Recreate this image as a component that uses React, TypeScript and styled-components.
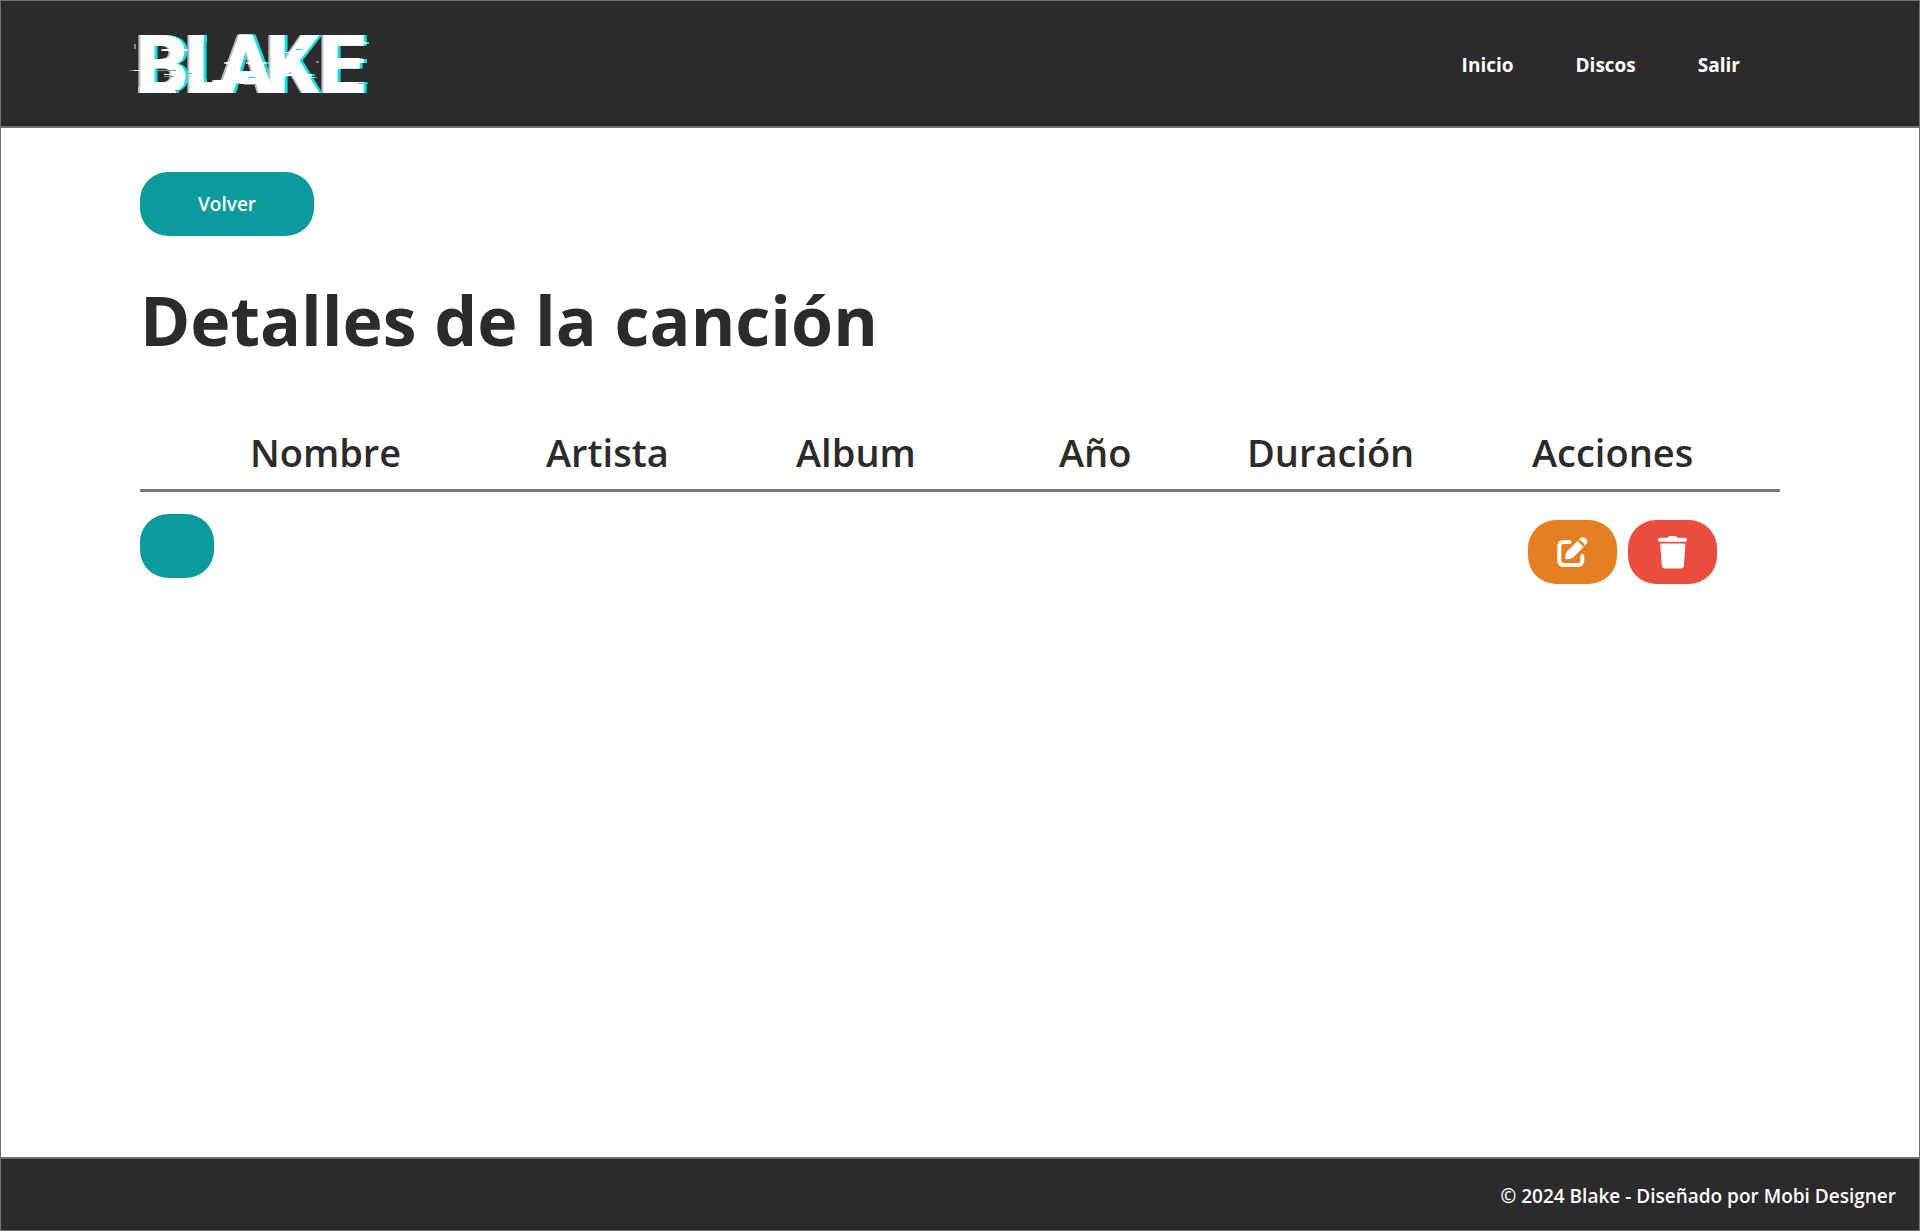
import React from "react";
import styled, { createGlobalStyle } from "styled-components";

const Global = createGlobalStyle`
  *, *::before, *::after { box-sizing: border-box; }
  body { margin: 0; background: #fff; color: #2b2b2b; font-family: "Open Sans", "Segoe UI", sans-serif; }
`;

const Page = styled.div`
  min-height: 100vh;
  display: flex;
  flex-direction: column;
  border: 1px solid #707070;
`;

const Header = styled.header`
  display: flex;
  align-items: center;
  justify-content: space-between;
  min-height: 127px;
  padding: 0 179px 0 127px;
  background: #2b2b2b;
  border-bottom: 2px solid #707070;
`;

const LogoLink = styled.a`
  display: block;
`;

const LogoArt = styled.svg`
  display: block;
  width: 250px;
  height: 101px;
`;

const LogoLetters = styled.g`
  fill: #fff;
  filter: drop-shadow(-2px 0 0 #c3b9c3) drop-shadow(3px 0 0 #10e0e4);
`;

const LogoText = styled.text`
  font-family: Roboto, sans-serif;
  font-size: 82px;
  font-weight: 900;
`;

const Nav = styled.nav`
  display: flex;
  gap: 62px;
  padding-top: 2px;
`;

const NavLink = styled.a`
  color: #fff;
  font-size: 19px;
  line-height: 28px;
  font-weight: 700;
  text-decoration: none;
`;

const Main = styled.main`
  flex: 1;
  padding: 44px 139px;
`;

const Pill = styled.button<{ $color: string; $pad: number }>`
  display: flex;
  align-items: center;
  justify-content: center;
  height: 64px;
  padding: 0 ${(p) => p.$pad}px;
  border: 0;
  border-radius: 28px;
  background: ${(p) => p.$color};
  color: #fff;
  font: 600 19px/28px "Open Sans", "Segoe UI", sans-serif;
  cursor: pointer;
`;

const Title = styled.h1`
  margin: 36px 0 54px;
  font-size: 68px;
  line-height: 96px;
  font-weight: 700;
`;

const Table = styled.table`
  width: 100%;
  table-layout: fixed;
  border-collapse: separate;
  border-spacing: 0;
`;

const HeadCell = styled.th`
  padding: 0 0 7px 4px;
  border-bottom: 3px solid #787878;
  font-size: 38px;
  line-height: 60px;
  font-weight: 600;
  text-align: left;
  white-space: nowrap;
`;

const Cell = styled.td`
  padding: 22px 0 0;
  vertical-align: top;
`;

const Actions = styled.div`
  display: flex;
  gap: 11px;
  padding-top: 6px;
`;

const Footer = styled.footer`
  display: flex;
  align-items: center;
  justify-content: flex-end;
  min-height: 73px;
  padding: 2px 23px 0;
  background: #2b2b2b;
  border-top: 2px solid #707070;
  color: #fff;
  font-size: 19px;
  line-height: 28px;
  font-weight: 600;
`;

const columns = [
  { label: "", width: 106 },
  { label: "Nombre", width: 296 },
  { label: "Artista", width: 250 },
  { label: "Album", width: 263 },
  { label: "Año", width: 188 },
  { label: "Duración", width: 285 },
  { label: "Acciones", width: 252 },
];

const Logo = () => (
  <LogoArt viewBox="0 0 250 101" role="img" aria-label="Blake">
    <LogoLetters>
      <LogoText x="8 57 90 138 191" y="80">BLAKE</LogoText>
      {/* glitch slices pulled out of the letters */}
      <path d="M12 74h36v6H12zM35 36h24v2H35zM62 22h14v7H62zM62 66h14v8H62z" />
      <path d="M98 49h14v2H98zM120 49h18v2h-18zM86 67h30v3H86zM112 69h26v2h-26z" />
      <path d="M120 66h26v2h-26zM142 39h34v1h-34zM142 61h42v2h-42zM168 64h18v1h-18z" />
      <path d="M198 29h40v2h-40zM198 46h38v4h-38zM196 56h14v1h-14zM198 69h38v1h-38z" />
    </LogoLetters>
    <path d="M5 57h18v1H5zM36 61h12v1H36z" fill="#fff" />
    <path d="M28 57h20v1H28zM116 71h12v1h-12zM36 63h9v1h-9z" fill="#8d8790" />
    <path d="M2 57h4v1H2zM6 31h2v5H6zM188 48h3v2h-3zM47 77h4v1h-4z" fill="#8a7c8c" />
    <path d="M230 70h10v1h-10zM120 64h7v1h-7zM168 36h6v1h-6zM60 60h4v1h-4z" fill="#10e0e4" />
  </LogoArt>
);

const EditIcon = () => (
  <svg width="33" height="34" viewBox="0 0 33 34" aria-hidden="true">
    <path
      d="M13.500 7H7.300a4 4 0 0 0-4 4v15a4 4 0 0 0 4 4h15a4 4 0 0 0 4-4v-5"
      fill="none"
      stroke="#fff"
      strokeWidth="4"
      strokeLinecap="round"
    />
    <path d="M9.300 23.200q-.3-5 3.200-8.400L21.600 6l6 6-9 9q-3.400 3.400-8.200 3.200-1 0-1.100-1z" fill="#fff" />
    <path d="M22.800 4.800l1.700-1.600q2.600-2.200 5.300.3 2.700 2.800.4 5.400l-1.600 1.800q-1-3.900-5.800-5.900z" fill="#fff" />
  </svg>
);

const TrashIcon = () => (
  <svg width="33" height="34" viewBox="0 0 33 34" aria-hidden="true">
    <path
      d="M4.600 2.700h7q.6-1.700 2.200-1.700h5.400q1.600 0 2.200 1.700h7q2.600 0 2.600 2.200 0 1.800-1.500 1.800h-26Q2 6.700 2 4.900 2 2.700 4.600 2.700z"
      fill="#fff"
    />
    <path d="M4.200 8.600h25.200l-1.500 22.200q-.2 2.600-2.600 2.600H8.500q-2.400 0-2.600-2.600z" fill="#fff" />
  </svg>
);

export default function App() {
  return (
    <Page>
      <Global />
      <Header>
        <LogoLink href="#"><Logo /></LogoLink>
        <Nav>
          <NavLink href="#inicio">Inicio</NavLink>
          <NavLink href="#discos">Discos</NavLink>
          <NavLink href="#salir">Salir</NavLink>
        </Nav>
      </Header>
      <Main>
        <Pill $color="#0d9a9d" $pad={58}>Volver</Pill>
        <Title>Detalles de la canción</Title>
        <Table>
          <colgroup>
            {columns.map((c) => <col key={c.label} width={c.width} />)}
          </colgroup>
          <thead>
            <tr>{columns.map((c) => <HeadCell key={c.label} scope="col">{c.label}</HeadCell>)}</tr>
          </thead>
          <tbody>
            <tr>
              <Cell><Pill $color="#0d9a9d" $pad={37} aria-label="Reproducir" /></Cell>
              <Cell /><Cell /><Cell /><Cell /><Cell />
              <Cell>
                <Actions>
                  <Pill $color="#e67f22" $pad={28} aria-label="Editar"><EditIcon /></Pill>
                  <Pill $color="#e84d3d" $pad={28} aria-label="Eliminar"><TrashIcon /></Pill>
                </Actions>
              </Cell>
            </tr>
          </tbody>
        </Table>
      </Main>
      <Footer>© 2024 Blake - Diseñado por Mobi Designer</Footer>
    </Page>
  );
}
